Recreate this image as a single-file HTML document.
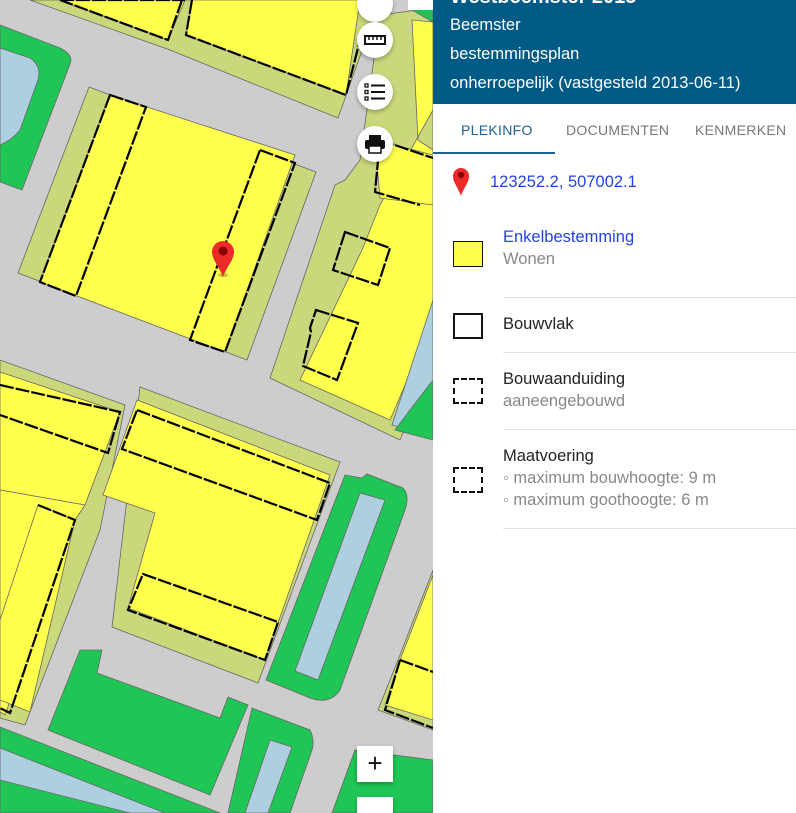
<!DOCTYPE html>
<html style="overflow:hidden;width:796px;height:813px"><head><meta charset="utf-8"><style>
*{margin:0;padding:0;box-sizing:border-box}
body{width:796px;height:813px;overflow:hidden;position:relative;font-family:"Liberation Sans",sans-serif;background:#cdcdcd}
#map{position:absolute;left:0;top:0;width:433px;height:813px}
.btn{position:absolute;left:357px;width:36px;height:36px;border-radius:50%;background:#fff;box-shadow:0 2px 4px rgba(0,0,0,.3);display:flex;align-items:center;justify-content:center}
.sq{position:absolute;left:357px;width:36px;height:36px;background:#fff;box-shadow:0 2px 4px rgba(0,0,0,.3);font-size:26px;text-align:center;line-height:34px;color:#111}
#panel{position:absolute;left:433px;top:0;width:363px;height:813px;background:#fff}
#hd{background:#005a86;height:104px;color:#fff;font-size:16.5px;padding-left:17px}
#hd div{position:absolute;left:17px}
.tabs{position:absolute;top:104px;left:0;width:363px;height:50px;font-size:14px;color:#777;letter-spacing:.3px}
.tabs span{position:absolute;top:18px}
.t{position:absolute;left:70px;font-size:16.5px;color:#222}
.g{color:#888}
.hr{position:absolute;left:70px;right:0;height:1px;background:#e2e2e2}
.ic{position:absolute;left:20px;width:30px;height:26px}
</style></head><body>
<svg id="map" width="433" height="813" viewBox="0 0 433 813">
<rect width="433" height="813" fill="#cdcdcd"/>
<g stroke="#666" stroke-width="0.8">
<path d="M0 25 L60 48 Q74 55 70 64 L22 190 L0 182Z" fill="#1fc655"/>
<path d="M0 48 L30 58 Q42 66 38 80 L20 130 Q12 140 0 145Z" fill="#aecfe0"/>
<path d="M30 0 L380 0 L338 118 L170 50Z" fill="#cbd77b"/>
<path d="M60 0 L185 0 L168 40Z" fill="#ffff4d"/>
<path d="M192 0 L360 0 L346 95 L186 35Z" fill="#ffff4d"/>
<path d="M89 87 L316 172 L247 360 L18 273Z" fill="#cbd77b"/>
<path d="M110 95 L295 155 L225 352 L40 282Z" fill="#ffff4d"/>
<path d="M380 15 L433 8 L433 360 L400 440 L270 378 L335 185 L345 180 L360 160Z" fill="#cbd77b"/>
<path d="M412 20 L433 22 L433 110 L380 205 L362 250 L300 380 L390 420 L433 320 L433 150 L418 140Z" fill="#ffff4d"/>
<path d="M375 140 L433 155 L433 205 L380 198Z" fill="#ffff4d"/>
<path d="M433 0 L433 22 L412 10 L420 0Z" fill="#1fc655"/>
<path d="M433 300 L433 400 L410 430 L392 425Z" fill="#aecfe0"/>
<path d="M433 380 L433 440 L395 430 L410 410Z" fill="#1fc655"/>
<path d="M0 360 L125 405 L100 530 L25 725 L0 718Z" fill="#cbd77b"/>
<path d="M0 372 L120 412 L85 505 L0 490Z" fill="#ffff4d"/>
<path d="M0 490 L85 505 L75 520 L5 715 L0 712Z" fill="#ffff4d"/>
<path d="M38 505 L75 520 L30 712 L0 700 L0 620Z" fill="#ffff4d"/>
<path d="M140 387 L340 462 L258 683 L112 627Z" fill="#cbd77b"/>
<path d="M137 400 L330 475 L265 660 L128 608 L155 513 L103 495Z" fill="#ffff4d"/>
<path d="M345 475 L362 478 L367 474 L403 488 Q410 495 405 510 L340 690 Q330 705 310 698 L266 680Z" fill="#1fc655"/>
<path d="M360 493 L385 500 L318 680 L295 671Z" fill="#aecfe0"/>
<path d="M80 650 L102 650 L97 673 L220 718 L228 697 L248 705 L210 795 L48 730Z" fill="#1fc655"/>
<path d="M0 727 L220 813 L0 813Z" fill="#1fc655"/>
<path d="M0 748 L165 813 L0 813 L0 780Z" fill="#aecfe0"/>
<path d="M0 780 L130 813 L0 813Z" fill="#1fc655"/>
<path d="M252 708 L310 730 Q315 740 312 750 L290 813 L228 813Z" fill="#1fc655"/>
<path d="M270 740 L292 747 L268 813 L245 813Z" fill="#aecfe0"/>
<path d="M355 750 L433 760 L433 813 L332 813Z" fill="#1fc655"/>
<path d="M433 570 L433 730 L378 710 L398 660Z" fill="#cbd77b"/>
<path d="M433 575 L433 720 L385 705 L400 660Z" fill="#ffff4d"/>
</g>
<g fill="none" stroke="#000" stroke-width="2.2" stroke-dasharray="14 2">
<path d="M60 0 L185 0 M182 0 L168 40 L60 0"/>
<path d="M192 0 L186 35 L346 95 L360 40"/>
<path d="M110 95 L146 107 L76 296 L40 282Z"/>
<path d="M260 150 L295 163 L225 352 L190 340Z"/>
<path d="M0 385 L120 412 L108 453 L0 415"/>
<path d="M38 505 L75 520 L10 713 L0 708"/>
<path d="M137 410 L330 483 L317 520 L122 449Z"/>
<path d="M143 574 L278 622 L265 660 L128 610Z"/>
<path d="M345 232 L390 248 L378 285 L333 270Z"/>
<path d="M316 310 L358 323 L337 380 L303 366 L311 332 L310 328Z"/>
<path d="M380 140 L433 158 M380 140 L375 192 L420 205"/>
<path d="M400 660 L433 672 M400 660 L385 710 L433 728"/>
</g>
<g transform="translate(223,242)">
<ellipse cx="0" cy="33" rx="5" ry="2" fill="rgba(0,0,0,.25)"/>
<path d="M0 35 C-4 24 -11 18 -11 10 A11 11 0 0 1 11 10 C11 18 4 24 0 35Z" fill="#ed2a2a"/>
<circle cx="0" cy="9" r="4.5" fill="#8a0000"/>
</g>
</svg>
<div class="btn" style="top:-14px"></div>
<div class="btn" style="top:22px"><svg width="22" height="14"><rect x="1" y="3" width="20" height="8" fill="none" stroke="#111" stroke-width="2"/><path d="M5 3v4M9 3v4M13 3v4M17 3v4" stroke="#111" stroke-width="1.5"/></svg></div>
<div class="btn" style="top:74px"><svg width="22" height="18"><g fill="none" stroke="#111" stroke-width="1.3"><rect x="1" y="1" width="3" height="3"/><rect x="1" y="7.5" width="3" height="3"/><rect x="1" y="14" width="3" height="3"/></g><path d="M7 2.5h14M7 9h14M7 15.5h14" stroke="#111" stroke-width="2"/></svg></div>
<div class="btn" style="top:126px"><svg width="22" height="20"><rect x="5" y="1" width="12" height="5" fill="#111"/><rect x="1" y="6" width="20" height="9" rx="2" fill="#111"/><rect x="5" y="12" width="12" height="7" fill="#fff" stroke="#111" stroke-width="1.5"/></svg></div>
<div class="sq" style="top:746px">+</div>
<div class="sq" style="top:797px;height:16px"></div>
<div style="position:absolute;left:408px;top:0;width:25px;height:10px;background:#fff"></div>
<div id="panel">
<div id="hd">
<div style="top:-14px;font-size:20px;font-weight:bold">Westbeemster 2013</div>
<div style="top:16px">Beemster</div>
<div style="top:45px">bestemmingsplan</div>
<div style="top:74px">onherroepelijk (vastgesteld 2013-06-11)</div>
</div>
<div class="tabs"><span style="left:28px;color:#1c6290">PLEKINFO</span><span style="left:133px">DOCUMENTEN</span><span style="left:262px">KENMERKEN</span>
<div style="position:absolute;left:0;top:48px;width:122px;height:2px;background:#1c6290"></div></div>
<svg style="position:absolute;left:19px;top:167px" width="18" height="30"><path d="M9 29 C6 20 1 16 1 9 A8 8 0 0 1 17 9 C17 16 12 20 9 29Z" fill="#ed2a2a"/><circle cx="9" cy="8" r="3.2" fill="#8a0000"/></svg>
<div style="position:absolute;left:57px;top:173px;font-size:16.5px;color:#2443e6">123252.2, 507002.1</div>
<div class="ic" style="top:241px;background:#ffff4d;border:1.5px solid #111"></div>
<div class="t" style="top:228px;color:#2443e6">Enkelbestemming</div>
<div class="t g" style="top:250px">Wonen</div>
<div class="hr" style="top:297px"></div>
<div class="ic" style="top:313px;border:2px solid #111"></div>
<div class="t" style="top:315px">Bouwvlak</div>
<div class="hr" style="top:352px"></div>
<div class="ic" style="top:378px;border:2px dashed #111"></div>
<div class="t" style="top:370px">Bouwaanduiding</div>
<div class="t g" style="top:392px">aaneengebouwd</div>
<div class="hr" style="top:429px"></div>
<div class="ic" style="top:467px;border:2px dashed #111"></div>
<div class="t" style="top:447px">Maatvoering</div>
<div class="t g" style="top:469px">◦ maximum bouwhoogte: 9 m</div>
<div class="t g" style="top:491px">◦ maximum goothoogte: 6 m</div>
<div class="hr" style="top:528px"></div>
</div>
</body></html>
